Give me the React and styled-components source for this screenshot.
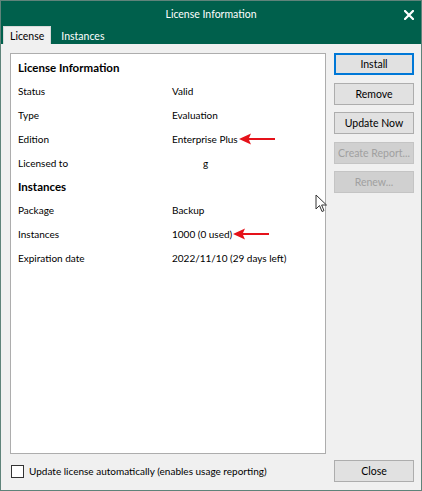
import styled, { createGlobalStyle } from 'styled-components';

const GlobalStyle = createGlobalStyle`
  html, body {
    margin: 0;
    padding: 0;
    background: #ffffff;
  }
  body {
    font-family: Lato, "Noto Sans", sans-serif;
    font-size: 10px;
    color: #000000;
  }
`;

const rows = [
  { type: 'header', label: 'License Information' },
  { label: 'Status', value: 'Valid' },
  { label: 'Type', value: 'Evaluation' },
  { label: 'Edition', value: 'Enterprise Plus', arrow: true },
  { label: 'Licensed to', value: 'g', hidden: true },
  { type: 'header', label: 'Instances' },
  { label: 'Package', value: 'Backup' },
  { label: 'Instances', value: '1000 (0 used)', arrow: true },
  { label: 'Expiration date', value: '2022/11/10 (29 days left)' },
];

const buttons = [
  { label: 'Install', focused: true },
  { label: 'Remove' },
  { label: 'Update Now' },
  { label: 'Create Report...', disabled: true },
  { label: 'Renew...', disabled: true },
];

const RedArrow = () => (
  <ArrowSvg width="36" height="12" viewBox="0 0 36 12">
    <path d="M0 6 L12 0.5 L10 5 L36 5 L36 7 L10 7 L12 11.5 Z" fill="#e5121a" />
  </ArrowSvg>
);

const Cursor = () => (
  <CursorSvg width="14" height="20" viewBox="0 0 14 20">
    <path
      d="M1 1 L1 15 L4.5 11.5 L7 17.5 L9 16.6 L6.6 11 L11.5 11 Z"
      fill="#ffffff"
      stroke="#333333"
      strokeWidth="1"
      strokeLinejoin="round"
    />
  </CursorSvg>
);

const CloseIcon = () => (
  <svg width="10" height="10" viewBox="0 0 10 10">
    <path d="M1 1 L9 9 M9 1 L1 9" stroke="#ffffff" strokeWidth="2.2" strokeLinecap="square" />
  </svg>
);

const App = () => {
  return (
    <>
      <GlobalStyle />
      <Window>
        <TitleBar>
          <Title>License Information</Title>
          <CloseBox>
            <CloseIcon />
          </CloseBox>
        </TitleBar>
        <TabStrip>
          <Tab $active>License</Tab>
          <Tab>Instances</Tab>
        </TabStrip>
        <Body>
          <Main>
            <Panel>
              {rows.map((row, i) =>
                row.type === 'header' ? (
                  <SectionHeader key={i}>{row.label}</SectionHeader>
                ) : (
                  <Row key={i}>
                    <Label>{row.label}</Label>
                    <Value $hidden={row.hidden}>
                      {row.value}
                      {row.arrow && <RedArrow />}
                    </Value>
                  </Row>
                )
              )}
            </Panel>
            <ButtonColumn>
              {buttons.map((b) => (
                <Button key={b.label} $focused={b.focused} disabled={b.disabled}>
                  {b.label}
                </Button>
              ))}
            </ButtonColumn>
          </Main>
          <Footer>
            <CheckLabel>
              <CheckBox />
              Update license automatically (enables usage reporting)
            </CheckLabel>
            <Button>Close</Button>
          </Footer>
        </Body>
        <Cursor />
      </Window>
    </>
  );
};

export default App;

const Window = styled.div`
  position: relative;
  box-sizing: border-box;
  width: 422px;
  height: 491px;
  display: flex;
  flex-direction: column;
  border: 1px solid #5f837a;
  background: #f0f0f0;
  overflow: hidden;
`;

const TitleBar = styled.div`
  height: 25px;
  background: #00604c;
  display: flex;
  align-items: center;
  justify-content: center;
  position: relative;
`;

const Title = styled.div`
  color: #ffffff;
  font-size: 10.5px;
`;

const CloseBox = styled.div`
  position: absolute;
  right: 7px;
  top: 9px;
  display: flex;
`;

const TabStrip = styled.div`
  height: 18px;
  background: #00604c;
  display: flex;
  align-items: flex-end;
  padding-left: 2px;
`;

const Tab = styled.div`
  height: ${(p) => (p.$active ? '18px' : '17px')};
  box-sizing: border-box;
  padding: 0 ${(p) => (p.$active ? '6px' : '10px')};
  display: flex;
  align-items: center;
  color: ${(p) => (p.$active ? '#000000' : '#ffffff')};
  background: ${(p) => (p.$active ? '#f0f0f0' : 'transparent')};
  border: ${(p) => (p.$active ? '1px solid #d9d9d9' : 'none')};
  border-bottom: none;
  font-size: 10.5px;
`;

const Body = styled.div`
  flex: 1;
  display: flex;
  flex-direction: column;
  padding: 9px 7px 8px 9px;
  min-height: 0;
`;

const Main = styled.div`
  flex: 1;
  display: flex;
  gap: 8px;
  min-height: 0;
`;

const Panel = styled.div`
  flex: 1;
  background: #ffffff;
  border: 1px solid #adadad;
  padding: 2px 7px 0 7px;
`;

const SectionHeader = styled.div`
  height: 23px;
  line-height: 23px;
  font-size: 11.5px;
  font-weight: 700;
`;

const Row = styled.div`
  height: 24px;
  display: flex;
  align-items: center;
`;

const Label = styled.div`
  width: 154px;
  flex-shrink: 0;
`;

const Value = styled.div`
  display: flex;
  align-items: center;
  padding-left: ${(p) => (p.$hidden ? '31px' : '0')};
`;

const ArrowSvg = styled.svg`
  margin-left: 1px;
  margin-top: -1px;
`;

const ButtonColumn = styled.div`
  width: 80px;
  display: flex;
  flex-direction: column;
  gap: 7.5px;
`;

const Button = styled.button`
  box-sizing: border-box;
  width: 80px;
  height: 22px;
  padding: 0;
  font-family: inherit;
  font-size: 10.5px;
  color: #000000;
  background: #e1e1e1;
  border: ${(p) => (p.$focused ? '2px solid #0078d7' : '1px solid #adadad')};
  white-space: nowrap;
  &:disabled {
    color: #a0a0a0;
    background: #d0d0d0;
    border-color: #c4c4c4;
  }
`;

const Footer = styled.div`
  display: flex;
  align-items: center;
  justify-content: space-between;
  margin-top: 6px;
`;

const CheckLabel = styled.label`
  display: flex;
  align-items: center;
  gap: 5px;
  padding-left: 1px;
  white-space: nowrap;
`;

const CheckBox = styled.span`
  width: 13px;
  height: 13px;
  box-sizing: border-box;
  border: 1px solid #333333;
  background: #ffffff;
`;

const CursorSvg = styled.svg`
  position: absolute;
  left: 314px;
  top: 193px;
`;
